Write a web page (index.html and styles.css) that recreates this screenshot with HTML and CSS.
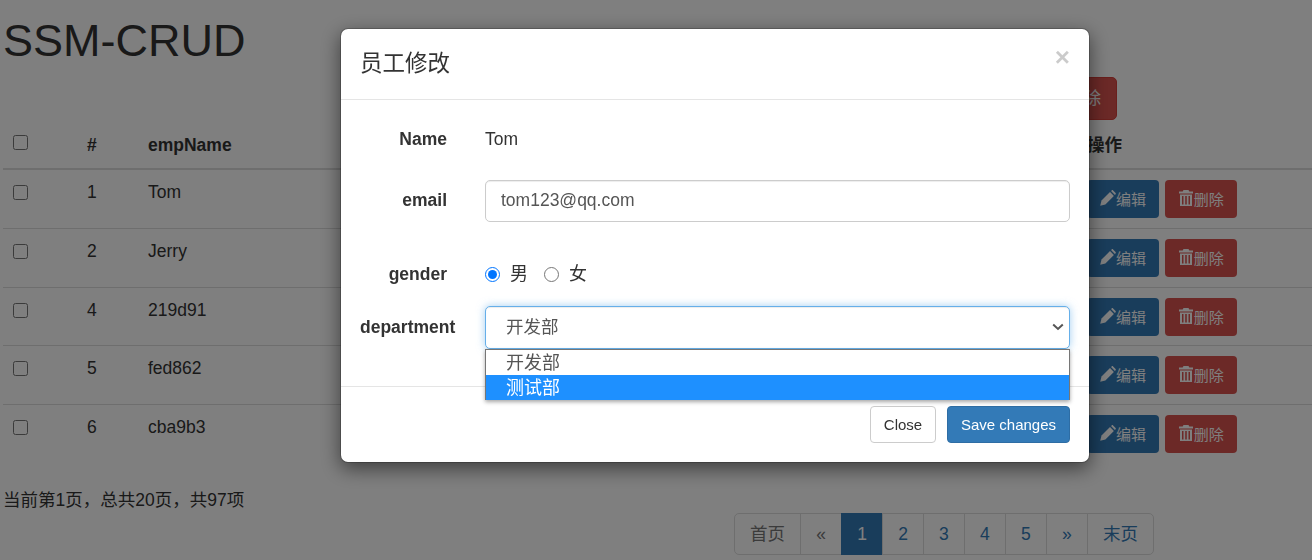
FILE: index.html
```html
<!DOCTYPE html>
<html lang="zh-CN">
<head>
    <meta charset="UTF-8">
    <meta name="viewport" content="width=device-width, initial-scale=1.0">
    <title>SSM-CRUD</title>
    <link rel="stylesheet" href="styles.css">
</head>
<body>
    <svg class="icon-defs" aria-hidden="true">
        <symbol id="icon-pencil" viewBox="0 0 16 16">
            <path d="M0.2 15.800l1.300-5.200L10 2.100l3.900 3.900-8.500 8.500z"/>
            <path d="M11 1.100l.7-.7c.4-.4 1-.4 1.400 0l2.500 2.500c.4.4.4 1 0 1.400l-.7.7z"/>
        </symbol>
        <symbol id="icon-trash" viewBox="0 0 16 16">
            <path d="M5.500 0h5l.8 1.500H15v2H1v-2h3.700z"/>
            <path d="M2 4.500h12V16H2zM4 6v8.500h1.500V6zM7.200 6v8.500h1.600V6zM10.500 6v8.500H12V6z" fill-rule="evenodd"/>
        </symbol>
    </svg>

    <div class="page">
        <h1 class="page-title">SSM-CRUD</h1>

        <div class="toolbar">
            <button class="btn btn-primary">新增</button>
            <button class="btn btn-danger">删除</button>
        </div>

        <table class="emp-table">
            <colgroup>
                <col class="col-check">
                <col class="col-id">
                <col>
                <col class="col-ops">
            </colgroup>
            <thead>
                <tr>
                    <th><input type="checkbox"></th>
                    <th>#</th>
                    <th>empName</th>
                    <th>操作</th>
                </tr>
            </thead>
            <tbody>
                <tr>
                    <td><input type="checkbox"></td>
                    <td>1</td>
                    <td>Tom</td>
                    <td class="ops">
                        <button class="btn-sm btn-primary"><svg class="icon"><use href="#icon-pencil"/></svg>编辑</button>
                        <button class="btn-sm btn-danger"><svg class="icon"><use href="#icon-trash"/></svg>删除</button>
                    </td>
                </tr>
                <tr>
                    <td><input type="checkbox"></td>
                    <td>2</td>
                    <td>Jerry</td>
                    <td class="ops">
                        <button class="btn-sm btn-primary"><svg class="icon"><use href="#icon-pencil"/></svg>编辑</button>
                        <button class="btn-sm btn-danger"><svg class="icon"><use href="#icon-trash"/></svg>删除</button>
                    </td>
                </tr>
                <tr class="row-short">
                    <td><input type="checkbox"></td>
                    <td>4</td>
                    <td>219d91</td>
                    <td class="ops">
                        <button class="btn-sm btn-primary"><svg class="icon"><use href="#icon-pencil"/></svg>编辑</button>
                        <button class="btn-sm btn-danger"><svg class="icon"><use href="#icon-trash"/></svg>删除</button>
                    </td>
                </tr>
                <tr>
                    <td><input type="checkbox"></td>
                    <td>5</td>
                    <td>fed862</td>
                    <td class="ops">
                        <button class="btn-sm btn-primary"><svg class="icon"><use href="#icon-pencil"/></svg>编辑</button>
                        <button class="btn-sm btn-danger"><svg class="icon"><use href="#icon-trash"/></svg>删除</button>
                    </td>
                </tr>
                <tr>
                    <td><input type="checkbox"></td>
                    <td>6</td>
                    <td>cba9b3</td>
                    <td class="ops">
                        <button class="btn-sm btn-primary"><svg class="icon"><use href="#icon-pencil"/></svg>编辑</button>
                        <button class="btn-sm btn-danger"><svg class="icon"><use href="#icon-trash"/></svg>删除</button>
                    </td>
                </tr>
            </tbody>
        </table>

        <p class="page-info">当前第1页，总共20页，共97项</p>

        <nav class="pager">
            <a class="disabled" href="#">首页</a>
            <a class="disabled" href="#">«</a>
            <a class="active" href="#">1</a>
            <a href="#">2</a>
            <a href="#">3</a>
            <a href="#">4</a>
            <a href="#">5</a>
            <a href="#">»</a>
            <a href="#">末页</a>
        </nav>
    </div>

    <div class="backdrop">
        <div class="modal">
            <div class="modal-header">
                <h4 class="modal-title">员工修改</h4>
                <span class="modal-close">×</span>
            </div>
            <form class="modal-body">
                <div class="form-row">
                    <label class="form-label">Name</label>
                    <span>Tom</span>
                </div>
                <div class="form-row form-row-help">
                    <label class="form-label">email</label>
                    <input class="form-control" type="text" value="tom123@qq.com">
                </div>
                <div class="form-row form-row-radio">
                    <label class="form-label">gender</label>
                    <div class="radios">
                        <label class="radio"><input type="radio" name="gender" checked>男</label>
                        <label class="radio"><input type="radio" name="gender">女</label>
                    </div>
                </div>
                <div class="form-row">
                    <label class="form-label">department</label>
                    <div class="select-wrap">
                        <select class="form-control form-select">
                            <option>开发部</option>
                            <option>测试部</option>
                        </select>
                        <svg class="select-arrow" viewBox="0 0 12 8"><path d="M1.200 1.500L6 6l4.800-4.500"/></svg>
                        <ul class="select-menu">
                            <li>开发部</li>
                            <li class="hover">测试部</li>
                        </ul>
                    </div>
                </div>
            </form>
            <div class="modal-footer">
                <button class="btn-modal btn-default">Close</button>
                <button class="btn-modal btn-save">Save changes</button>
            </div>
        </div>
    </div>
</body>
</html>
```

FILE: styles.css
```css
* {
    box-sizing: border-box;
}
body {
    margin: 0;
    background-color: #fff;
    color: #333;
    font-family: "Liberation Sans", "Noto Sans CJK SC", sans-serif;
    font-size: 17.5px;
    line-height: 25px;
    overflow: hidden;
}
.icon-defs {
    display: none;
}
.page {
    height: 560px;
    padding: 16px 0 0 3px;
}
.page-title {
    margin: 0;
    font-size: 45px;
    font-weight: 500;
    line-height: 50px;
}
.toolbar {
    display: flex;
    justify-content: flex-end;
    gap: 6px;
    margin-top: 11px;
    padding-right: 195px;
}
.btn {
    height: 43px;
    padding: 0 15px;
    border: 1px solid transparent;
    border-radius: 5px;
    font: inherit;
    color: #fff;
}
.btn-primary {
    background-color: #337ab7;
    border-color: #2e6da4;
}
.btn-danger {
    background-color: #d9534f;
    border-color: #d43f3a;
}

.emp-table {
    width: 1309px;
    margin-top: 8px;
    border-collapse: collapse;
    table-layout: fixed;
}
.col-check {
    width: 74px;
}
.col-id {
    width: 61px;
}
.col-ops {
    width: 235px;
}
.emp-table th {
    padding: 5px 10px 10px;
    text-align: left;
    vertical-align: top;
    border-bottom: 2px solid #ddd;
}
.emp-table td {
    height: 59px;
    padding: 10px;
    vertical-align: top;
    border-bottom: 1px solid #ddd;
}
.emp-table .row-short td {
    height: 58px;
    padding-bottom: 9px;
}
.emp-table tbody tr:last-child td {
    border-bottom: 0;
}
.emp-table input {
    display: block;
    width: 15px;
    height: 15px;
    margin: 5px 0 0;
}
.emp-table th input {
    margin-top: 2px;
}
.ops {
    white-space: nowrap;
}
.btn-sm {
    display: inline-flex;
    align-items: center;
    justify-content: center;
    width: 72px;
    height: 38px;
    padding: 0;
    border: 1px solid transparent;
    border-radius: 4px;
    font: inherit;
    font-size: 15px;
    color: #fff;
}
.btn-sm + .btn-sm {
    margin-left: 1px;
}
.icon {
    width: 16px;
    height: 16px;
    margin-top: -3px;
    fill: currentColor;
}

.page-info {
    margin: 24px 0 0;
}
.pager {
    display: flex;
    justify-content: flex-end;
    padding-right: 158px;
}
.pager a {
    height: 42px;
    margin-left: -1px;
    padding: 8px 15.120px;
    border: 1px solid #ddd;
    background-color: #fff;
    color: #337ab7;
    text-decoration: none;
}
.pager a:first-child {
    border-radius: 5px 0 0 5px;
}
.pager a:last-child {
    border-radius: 0 5px 5px 0;
}
.pager a.disabled {
    color: #777;
}
.pager a.active {
    background-color: #337ab7;
    border-color: #337ab7;
    color: #fff;
}

.backdrop {
    position: fixed;
    top: 0;
    left: 0;
    right: 0;
    bottom: 0;
    padding: 28px 0 0 340px;
    background-color: rgba(0, 0, 0, 0.5);
}
.modal {
    width: 750px;
    background-color: #fff;
    border: 1px solid rgba(0, 0, 0, 0.2);
    border-radius: 8px;
    box-shadow: 0 6px 19px rgba(0, 0, 0, 0.5);
    background-clip: padding-box;
}
.modal-header {
    display: flex;
    justify-content: space-between;
    align-items: flex-start;
    height: 71px;
    padding: 19px 19px 0;
    border-bottom: 1px solid #e5e5e5;
}
.modal-title {
    margin: 0;
    font-size: 22.5px;
    font-weight: 400;
    line-height: 32px;
}
.modal-close {
    margin: -4px 0 0;
    font-size: 26px;
    font-weight: 700;
    line-height: 26px;
    color: #000;
    opacity: 0.2;
}
.modal-body {
    padding: 18px 19px 18.500px;
}
.form-row {
    display: grid;
    grid-template-columns: 87px 585px;
    column-gap: 38px;
    align-items: center;
    min-height: 42.5px;
    margin-bottom: 19px;
}
.form-row-help {
    margin-bottom: 40px;
}
.form-row-radio {
    min-height: 25px;
}
.form-label {
    font-weight: 700;
    text-align: right;
    white-space: nowrap;
}
.form-control {
    width: 100%;
    height: 42.5px;
    padding: 0 15px;
    border: 1px solid #ccc;
    border-radius: 5px;
    background-color: #fff;
    box-shadow: inset 0 1px 1px rgba(0, 0, 0, 0.075);
    font: inherit;
    color: #555;
}
.radios {
    display: flex;
    gap: 16px;
    font-size: 18px;
}
.radio {
    display: flex;
    align-items: center;
}
.radio input {
    width: 15px;
    height: 15px;
    margin: 0 10px 0 0;
}
.select-wrap {
    position: relative;
}
.form-select {
    display: block;
    padding-left: 20px;
    border-color: #66afe9;
    box-shadow: inset 0 1px 1px rgba(0, 0, 0, 0.075), 0 0 8px rgba(102, 175, 233, 0.6);
    appearance: none;
}
.select-arrow {
    position: absolute;
    top: 17px;
    right: 6px;
    width: 12px;
    height: 8px;
    fill: none;
    stroke: #555;
    stroke-width: 2;
}
.select-menu {
    position: absolute;
    top: 43px;
    left: 0;
    width: 585px;
    margin: 0;
    padding: 0;
    list-style: none;
    background-color: #fff;
    border: 1px solid #767676;
    border-bottom: 0;
    box-shadow: 0 2px 4px rgba(0, 0, 0, 0.35);
    font-size: 18px;
    color: #555;
    z-index: 2;
}
.select-menu li {
    height: 25px;
    padding-left: 20px;
    line-height: 27px;
}
.select-menu .hover {
    background-color: #1e90ff;
    color: #fff;
}
.modal-footer {
    display: flex;
    justify-content: flex-end;
    gap: 11px;
    height: 76px;
    padding: 19px 19px 0;
    border-top: 1px solid #e5e5e5;
}
.btn-modal {
    height: 37px;
    border: 1px solid transparent;
    border-radius: 4px;
    font: inherit;
    font-size: 15px;
}
.btn-default {
    width: 66px;
    background-color: #fff;
    border-color: #ccc;
    color: #333;
}
.btn-save {
    width: 123px;
    background-color: #337ab7;
    border-color: #2e6da4;
    color: #fff;
}
```
